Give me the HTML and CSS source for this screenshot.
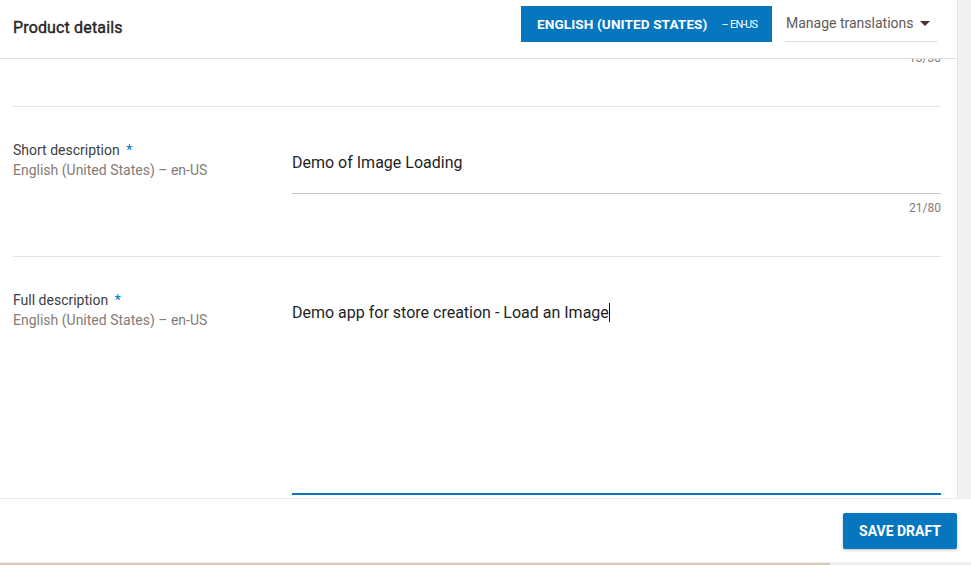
FILE: index.html
```html
<!DOCTYPE html>
<html lang="en">
<head>
<meta charset="utf-8">
<title>Product details</title>
<link rel="stylesheet" href="styles.css">
</head>
<body>
<div class="page">
  <div class="main">
    <div class="content">
      <header class="header">
        <h1 class="title">Product details</h1>
        <div class="header-actions">
          <button class="lang-btn"><span class="lang-name">ENGLISH (UNITED STATES)</span><span class="lang-code">– EN-US</span></button>
          <div class="manage">
            <span>Manage translations</span>
            <svg class="caret" width="10" height="5" viewBox="0 0 10 5"><path d="M0 0 L10 0 L5 5 Z" fill="#4a2f36"/></svg>
          </div>
        </div>
      </header>
      <div class="scroll">
        <div class="scroll-inner">
          <div class="row row-first">
            <div></div>
            <div class="field"><div class="counter">13/30</div></div>
          </div>
          <div class="row">
            <div class="label">
              <div class="label-name">Short description <span class="req">*</span></div>
              <div class="label-sub">English (United States) – en-US</div>
            </div>
            <div class="field">
              <div class="input">Demo of Image Loading</div>
              <div class="counter">21/80</div>
            </div>
          </div>
          <div class="row">
            <div class="label">
              <div class="label-name">Full description <span class="req">*</span></div>
              <div class="label-sub">English (United States) – en-US</div>
            </div>
            <div class="field">
              <div class="input textarea focused">Demo app for store creation - Load an Image<span class="cursor"></span></div>
            </div>
          </div>
        </div>
      </div>
    </div>
    <div class="scrollbar"></div>
  </div>
  <footer class="footer">
    <button class="save-btn">SAVE DRAFT</button>
  </footer>
  <div class="progress"><div class="progress-bar"></div></div>
</div>
</body>
</html>
```

FILE: styles.css
```css
* { box-sizing: border-box; }
html, body { margin: 0; padding: 0; }
body {
  font-family: Roboto, "Noto Sans", "Liberation Sans", sans-serif;
  background: #ffffff;
  color: #202124;
}
.page {
  width: 971px;
  height: 565px;
  display: flex;
  flex-direction: column;
  overflow: hidden;
}
.main {
  display: flex;
  height: 498px;
}
.content {
  flex: 1;
  display: flex;
  flex-direction: column;
  min-width: 0;
}
.scrollbar {
  width: 14px;
  background: #f1f1f1;
  border-left: 1px solid #e2e2e2;
}
.header {
  height: 59px;
  flex: none;
  display: flex;
  align-items: flex-start;
  justify-content: space-between;
  border-bottom: 1px solid #e0e0e0;
  padding: 0 20px 0 13px;
}
.title {
  margin: 0;
  padding-top: 18px;
  font-size: 16px;
  line-height: 20px;
  font-weight: 400;
  letter-spacing: 0.15px;
  -webkit-text-stroke: 0.4px #2a2427;
  color: #2a2427;
}
.header-actions {
  display: flex;
  align-items: flex-start;
  gap: 13px;
  padding-top: 6px;
}
.lang-btn {
  height: 36px;
  width: 251px;
  border: none;
  background: #0676be;
  color: #fff;
  font-family: inherit;
  display: flex;
  align-items: center;
  justify-content: flex-start;
  white-space: nowrap;
  padding: 0 0 0 16px;
  gap: 14px;
  cursor: pointer;
}
.lang-name {
  font-size: 13.6px;
  font-weight: 700;
  letter-spacing: 0.1px;
}
.lang-code {
  font-size: 11px;
  font-weight: 400;
  letter-spacing: -0.7px;
}
.manage {
  width: 152px;
  height: 36px;
  border-bottom: 1px solid #dcdcdc;
  display: flex;
  align-items: center;
  justify-content: space-between;
  padding: 0 7px 2px 1px;
  font-size: 14px;
  color: #5f5a58;
}
.caret { display: block; margin-top: 1px; }
.scroll {
  flex: 1;
  overflow: hidden;
}
.scroll-inner {
  margin-top: -15px;
}
.row {
  display: grid;
  grid-template-columns: 279px 1fr;
  margin: 0 16px 0 13px;
  padding: 33px 0 40px;
  border-top: 1px solid #e3e3e3;
}
.row-first {
  border-top: none;
  padding: 0 0 40px;
}
.label-name {
  font-size: 14px;
  line-height: 20px;
  color: #3c4043;
}
.req { color: #0676be; margin-left: 3px; }
.label-sub {
  font-size: 14px;
  line-height: 20px;
  color: #857b75;
}
.field {
  display: flex;
  flex-direction: column;
}
.input {
  padding-top: 11px;
  padding-bottom: 18px;
  font-size: 16px;
  line-height: 24px;
  color: #231f25;
  border-bottom: 1px solid #cdc5bd;
}
.textarea {
  height: 205px;
}
.focused {
  border-bottom: 2px solid #0676be;
}
.cursor {
  display: inline-block;
  width: 1px;
  height: 19px;
  background: #111;
  vertical-align: -4px;
}
.counter {
  margin-top: 6px;
  text-align: right;
  font-size: 12px;
  line-height: 16px;
  color: #857b75;
}
.footer {
  flex: none;
  height: 64px;
  border-top: 1px solid #ececec;
  display: flex;
  justify-content: flex-end;
  align-items: flex-start;
  padding: 14px 14px 0 0;
}
.save-btn {
  height: 36px;
  width: 114px;
  border: none;
  border-radius: 2px;
  background: #0676be;
  color: #fff;
  font-family: inherit;
  font-size: 14px;
  font-weight: 700;
  box-shadow: 0 1px 3px rgba(0,0,0,0.25);
  cursor: pointer;
}
.progress {
  height: 3px;
  background: #eeeeee;
  display: flex;
  align-items: flex-end;
}
.progress-bar {
  width: 830px;
  height: 2px;
  background: #d9cab4;
}
```
